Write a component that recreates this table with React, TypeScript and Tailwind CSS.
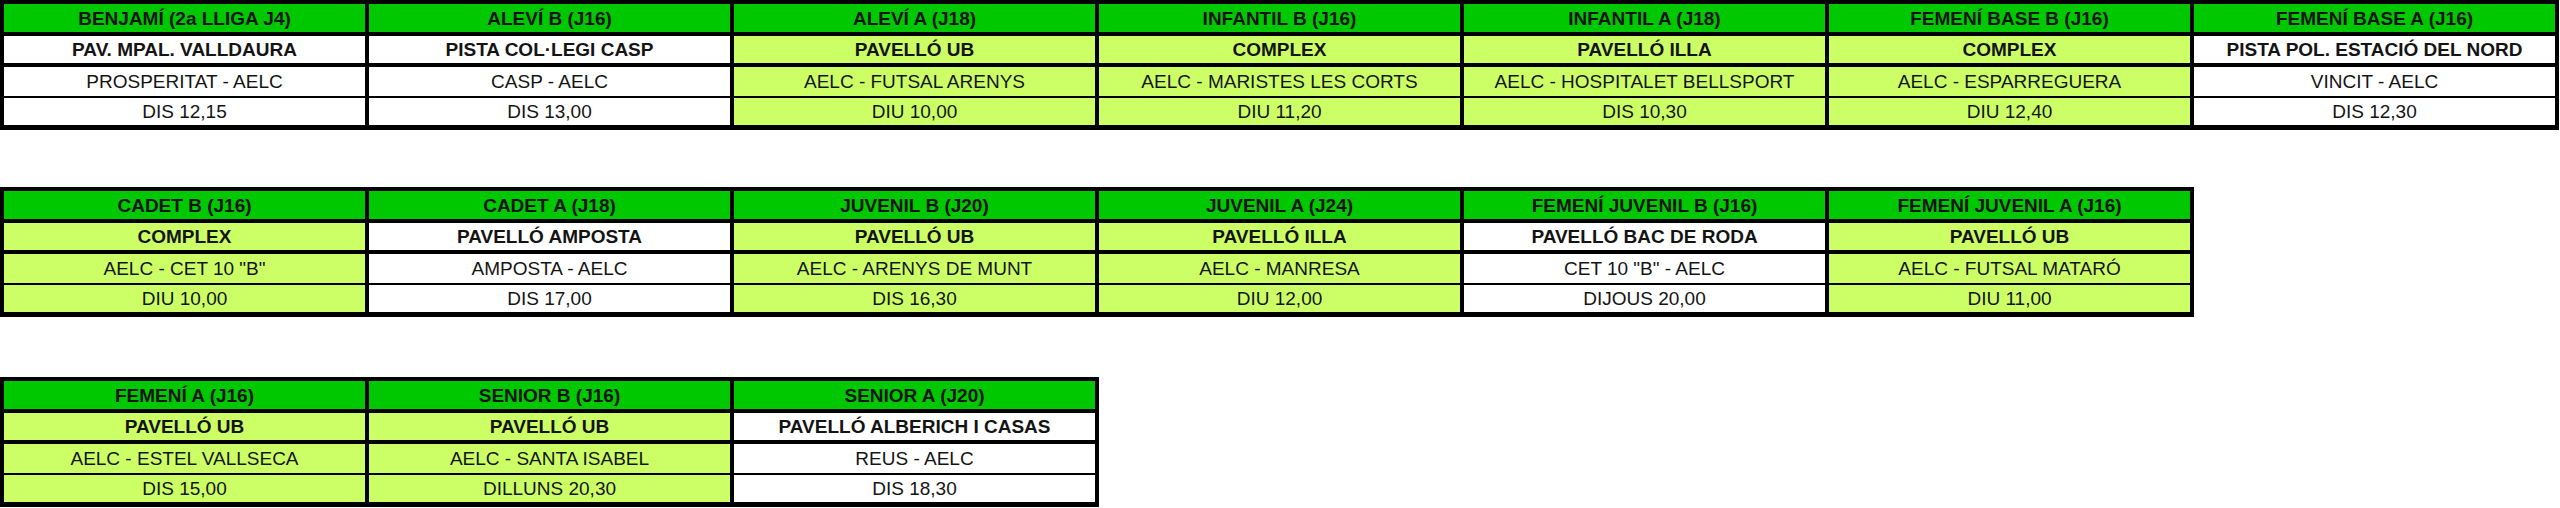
type Game = {
  team: string;
  venue: string;
  match: string;
  time: string;
  home: boolean;
};

const rows: Game[][] = [
  [
    { team: "BENJAMÍ (2a LLIGA J4)", venue: "PAV. MPAL. VALLDAURA", match: "PROSPERITAT - AELC", time: "DIS 12,15", home: false },
    { team: "ALEVÍ B (J16)", venue: "PISTA COL·LEGI CASP", match: "CASP - AELC", time: "DIS 13,00", home: false },
    { team: "ALEVÍ A (J18)", venue: "PAVELLÓ UB", match: "AELC - FUTSAL ARENYS", time: "DIU 10,00", home: true },
    { team: "INFANTIL B (J16)", venue: "COMPLEX", match: "AELC - MARISTES LES CORTS", time: "DIU 11,20", home: true },
    { team: "INFANTIL A (J18)", venue: "PAVELLÓ ILLA", match: "AELC - HOSPITALET BELLSPORT", time: "DIS 10,30", home: true },
    { team: "FEMENÍ BASE B (J16)", venue: "COMPLEX", match: "AELC - ESPARREGUERA", time: "DIU 12,40", home: true },
    { team: "FEMENÍ BASE A (J16)", venue: "PISTA POL. ESTACIÓ DEL NORD", match: "VINCIT - AELC", time: "DIS 12,30", home: false },
  ],
  [
    { team: "CADET B (J16)", venue: "COMPLEX", match: 'AELC - CET 10 "B"', time: "DIU 10,00", home: true },
    { team: "CADET A (J18)", venue: "PAVELLÓ AMPOSTA", match: "AMPOSTA - AELC", time: "DIS 17,00", home: false },
    { team: "JUVENIL B (J20)", venue: "PAVELLÓ UB", match: "AELC - ARENYS DE MUNT", time: "DIS 16,30", home: true },
    { team: "JUVENIL A (J24)", venue: "PAVELLÓ ILLA", match: "AELC - MANRESA", time: "DIU 12,00", home: true },
    { team: "FEMENÍ JUVENIL B (J16)", venue: "PAVELLÓ BAC DE RODA", match: 'CET 10 "B" - AELC', time: "DIJOUS 20,00", home: false },
    { team: "FEMENÍ JUVENIL A (J16)", venue: "PAVELLÓ UB", match: "AELC - FUTSAL MATARÓ", time: "DIU 11,00", home: true },
  ],
  [
    { team: "FEMENÍ A (J16)", venue: "PAVELLÓ UB", match: "AELC - ESTEL VALLSECA", time: "DIS 15,00", home: true },
    { team: "SENIOR B (J16)", venue: "PAVELLÓ UB", match: "AELC - SANTA ISABEL", time: "DILLUNS 20,30", home: true },
    { team: "SENIOR A (J20)", venue: "PAVELLÓ ALBERICH I CASAS", match: "REUS - AELC", time: "DIS 18,30", home: false },
  ],
];

function Table({ games }: { games: Game[] }) {
  const cell = (g: Game) => (g.home ? "bg-[#ccff66]" : "bg-white");
  return (
    <div className="w-fit bg-black pt-[4px] pb-[5px] px-[4px] flex flex-col">
      <div className="flex gap-x-[4px]">
        {games.map((g) => (
          <div key={g.team} className="w-[361px] h-[28px] bg-[#00c800] flex items-center justify-center font-bold text-[#141414]">
            {g.team}
          </div>
        ))}
      </div>
      <div className="flex gap-x-[4px] mt-[4px]">
        {games.map((g) => (
          <div key={g.team} className={`w-[361px] h-[27px] ${cell(g)} flex items-center justify-center font-bold text-[#141414]`}>
            {g.venue}
          </div>
        ))}
      </div>
      <div className="flex gap-x-[4px] mt-[4px]">
        {games.map((g) => (
          <div key={g.team} className={`w-[361px] h-[29px] ${cell(g)} flex items-center justify-center text-[#141414]`}>
            {g.match}
          </div>
        ))}
      </div>
      <div className="flex gap-x-[4px] mt-[2px]">
        {games.map((g) => (
          <div key={g.team} className={`w-[361px] h-[27px] ${cell(g)} flex items-center justify-center text-[#141414]`}>
            {g.time}
          </div>
        ))}
      </div>
    </div>
  );
}

export default function App() {
  return (
    <div className="w-[2560px] h-[508px] bg-white font-['Liberation_Sans',Arial,sans-serif] text-[19px] leading-none flex flex-col">
      <Table games={rows[0]} />
      <div className="mt-[57px]">
        <Table games={rows[1]} />
      </div>
      <div className="mt-[60px]">
        <Table games={rows[2]} />
      </div>
    </div>
  );
}
